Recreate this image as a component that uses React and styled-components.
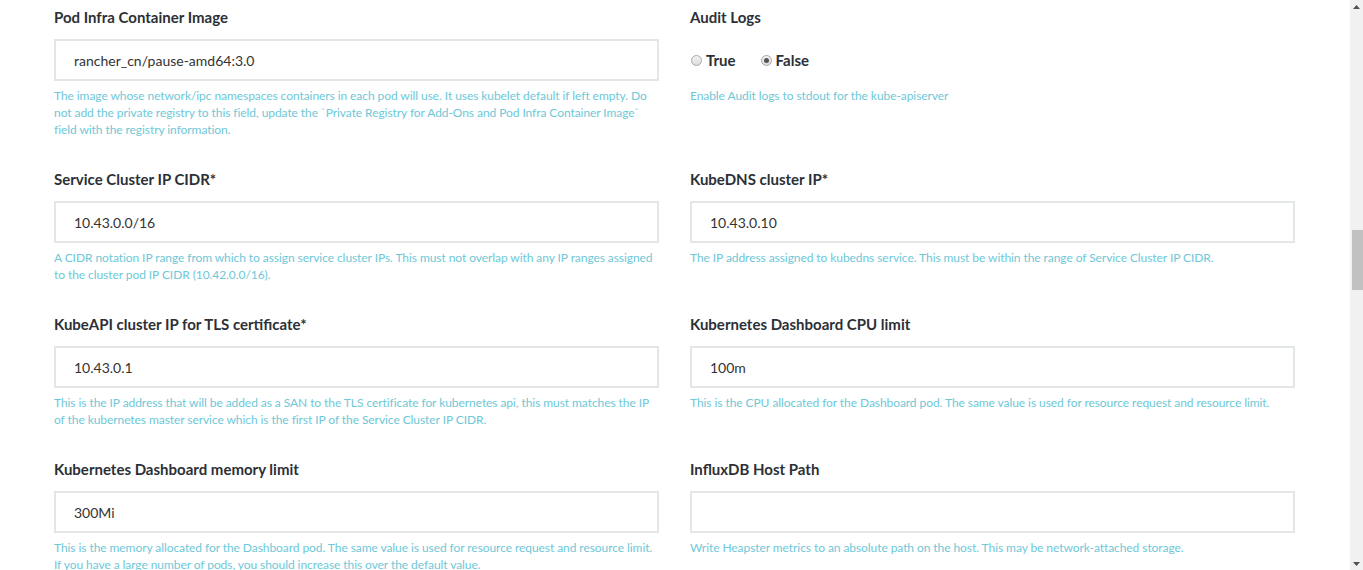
import React from "react";
import styled, { createGlobalStyle } from "styled-components";

const Global = createGlobalStyle`
  html, body { margin: 0; padding: 0; background: #fff; overflow: hidden; }
  body { font-family: Lato, "Open Sans", sans-serif; color: #2c3036; }
  * { box-sizing: border-box; }
`;

const Page = styled.div`
  display: flex;
  height: 570px;
  width: 1363px;
  overflow: hidden;
`;

const Main = styled.main`
  flex: 1;
  padding: 7px 55px 0 54px;
  overflow: hidden;
`;

const Row = styled.div`
  display: grid;
  grid-template-columns: 1fr 1fr;
  column-gap: 31px;
  margin-bottom: 31px;
`;

const Field = styled.div`
  display: flex;
  flex-direction: column;
`;

const Label = styled.label`
  font-size: 15px;
  line-height: 20px;
  font-weight: 700;
  color: #2c3036;
  margin-bottom: 12px;
`;

const Input = styled.input`
  height: 42px;
  width: 100%;
  border: 2px solid #e4e7e7;
  border-radius: 0;
  padding: 0 18px;
  font-family: Lato, "Open Sans", sans-serif;
  font-size: 14px;
  color: #333;
  background: #fff;
  outline: none;
`;

const Help = styled.p`
  margin: 6px 0 0;
  font-size: 12px;
  line-height: 17px;
  letter-spacing: -0.07px;
  color: #6ec8d8;
`;

const RadioGroup = styled.div`
  height: 42px;
  display: flex;
  align-items: center;
  gap: 24px;
`;

const RadioOption = styled.span`
  display: inline-flex;
  align-items: center;
  gap: 4px;
  font-size: 15px;
  font-weight: 700;
  color: #2c3036;
  padding-left: 1px;
`;

const RadioDot = styled.span`
  width: 11px;
  height: 11px;
  border-radius: 50%;
  border: 1px solid #a9a9a9;
  background: linear-gradient(#f4f4f4, #dcdcdc);
  display: inline-flex;
  align-items: center;
  justify-content: center;
  &::after {
    content: "";
    width: 5px;
    height: 5px;
    border-radius: 50%;
    background: ${(p) => (p.$checked ? "#555" : "transparent")};
  }
`;

const Scrollbar = styled.div`
  width: 13px;
  background: #f1f1f1;
  display: flex;
  flex-direction: column;
  align-items: stretch;
`;

const Arrow = styled.div`
  height: 13px;
  display: flex;
  align-items: center;
  justify-content: center;
`;

const Track = styled.div`
  flex: 1;
  padding-top: 217px;
  padding-left: 2px;
`;

const Thumb = styled.div`
  height: 60px;
  background: #c1c1c1;
`;

function TextField({ label, value, help }) {
  return (
    <Field>
      <Label>{label}</Label>
      <Input defaultValue={value} readOnly />
      <Help>{help}</Help>
    </Field>
  );
}

const rows = [
  [
    {
      label: "Pod Infra Container Image",
      value: "rancher_cn/pause-amd64:3.0",
      help:
        "The image whose network/ipc namespaces containers in each pod will use. It uses kubelet default if left empty. Do not add the private registry to this field, update the `Private Registry for Add-Ons and Pod Infra Container Image` field with the registry information.",
    },
    null,
  ],
  [
    {
      label: "Service Cluster IP CIDR*",
      value: "10.43.0.0/16",
      help:
        "A CIDR notation IP range from which to assign service cluster IPs. This must not overlap with any IP ranges assigned to the cluster pod IP CIDR (10.42.0.0/16).",
    },
    {
      label: "KubeDNS cluster IP*",
      value: "10.43.0.10",
      help:
        "The IP address assigned to kubedns service. This must be within the range of Service Cluster IP CIDR.",
    },
  ],
  [
    {
      label: "KubeAPI cluster IP for TLS certificate*",
      value: "10.43.0.1",
      help:
        "This is the IP address that will be added as a SAN to the TLS certificate for kubernetes api, this must matches the IP of the kubernetes master service which is the first IP of the Service Cluster IP CIDR.",
    },
    {
      label: "Kubernetes Dashboard CPU limit",
      value: "100m",
      help:
        "This is the CPU allocated for the Dashboard pod. The same value is used for resource request and resource limit.",
    },
  ],
  [
    {
      label: "Kubernetes Dashboard memory limit",
      value: "300Mi",
      help:
        "This is the memory allocated for the Dashboard pod. The same value is used for resource request and resource limit. If you have a large number of pods, you should increase this over the default value.",
    },
    {
      label: "InfluxDB Host Path",
      value: "",
      help:
        "Write Heapster metrics to an absolute path on the host. This may be network-attached storage.",
    },
  ],
];

export default function App() {
  return (
    <>
      <Global />
      <Page>
        <Main>
          {rows.map((row, i) => (
            <Row key={i}>
              <TextField {...row[0]} />
              {row[1] ? (
                <TextField {...row[1]} />
              ) : (
                <Field>
                  <Label>Audit Logs</Label>
                  <RadioGroup>
                    <RadioOption>
                      <RadioDot />
                      True
                    </RadioOption>
                    <RadioOption>
                      <RadioDot $checked />
                      False
                    </RadioOption>
                  </RadioGroup>
                  <Help>Enable Audit logs to stdout for the kube-apiserver</Help>
                </Field>
              )}
            </Row>
          ))}
        </Main>
        <Scrollbar>
          <Arrow>
            <svg width="7" height="4" viewBox="0 0 7 4">
              <path d="M0 4 L3.5 0 L7 4 Z" fill="#505050" />
            </svg>
          </Arrow>
          <Track>
            <Thumb />
          </Track>
          <Arrow>
            <svg width="7" height="4" viewBox="0 0 7 4">
              <path d="M0 0 L3.5 4 L7 0 Z" fill="#505050" />
            </svg>
          </Arrow>
        </Scrollbar>
      </Page>
    </>
  );
}
